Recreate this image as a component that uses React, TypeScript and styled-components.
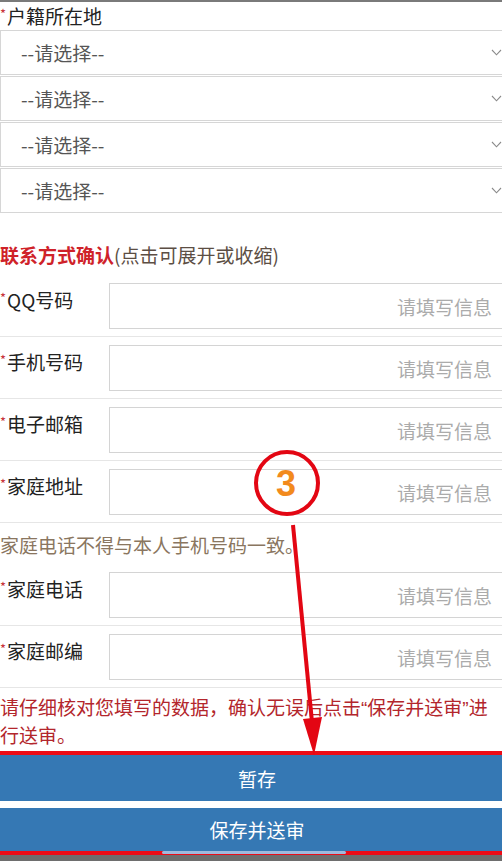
import React from 'react';
import styled, { createGlobalStyle } from 'styled-components';

const GlobalStyle = createGlobalStyle`
    html, body {
        margin: 0;
        padding: 0;
        background: #ffffff;
    }
    body {
        font-family: "Noto Sans CJK SC", "Noto Sans", "Liberation Sans", sans-serif;
    }
`;

const Page = styled.div`
    position: relative;
    width: 502px;
    height: 861px;
    overflow: hidden;
    background: #ffffff;
    border-top: 2px solid #7a7a7a;
    box-sizing: border-box;
`;

const FormBody = styled.div`
    width: 506px;
    display: flex;
    flex-direction: column;
`;

const Star = styled.span`
    color: #c8323a;
    font-size: 13px;
    vertical-align: 5px;
    margin-right: 1px;
`;

const FieldTitle = styled.div`
    height: 28px;
    line-height: 24px;
    font-size: 19px;
    color: #222222;
`;

const SelectBox = styled.div`
    height: 45px;
    margin-bottom: 1px;
    box-sizing: border-box;
    border: 1px solid #d6d6d6;
    display: flex;
    align-items: center;
    justify-content: space-between;
    padding: 0 3px 0 20px;
    font-size: 19px;
    color: #555555;
`;

const Chevron = styled.svg`
    width: 11px;
    height: 7px;
`;

const SectionHeader = styled.div`
    height: 61px;
    display: flex;
    align-items: flex-end;
    padding-bottom: 7px;
    box-sizing: border-box;
    font-size: 19px;
    line-height: 26px;
`;

const HeaderStrong = styled.span`
    color: #cf2229;
    font-weight: 700;
`;

const HeaderHint = styled.span`
    color: #5c4e44;
`;

const Row = styled.div`
    display: flex;
    height: 62px;
    box-sizing: border-box;
    padding-top: 8px;
    border-bottom: 1px solid #e6e6e6;
`;

const RowLabel = styled.div`
    width: 109px;
    flex-shrink: 0;
    padding-top: 2px;
    font-size: 19px;
    line-height: 26px;
    color: #222222;
`;

const InputBox = styled.div`
    flex: 1;
    height: 46px;
    box-sizing: border-box;
    border: 1px solid #d4d4d4;
    display: flex;
    align-items: center;
    justify-content: flex-end;
    padding-right: 13px;
    font-size: 19px;
    color: #ababab;
`;

const Notice = styled.div<{ $tone: 'brown' | 'red' }>`
    font-size: 19px;
    line-height: 28px;
    color: ${({ $tone }) => ($tone === 'red' ? '#b3262c' : '#8a7660')};
    padding: ${({ $tone }) => ($tone === 'red' ? '7px 0 0 0' : '8px 0 5px 0')};
    width: 502px;
    box-sizing: border-box;
`;

const ReviewNotice = styled(Notice)`
    font-family: "Liberation Sans", "Noto Sans CJK SC", sans-serif;
`;

const ButtonFrame = styled.div`
    border-top: 4px solid #ec0c17;
    border-bottom: 4px solid #ec0c17;
    display: flex;
    flex-direction: column;
    gap: 7px;
`;

const ActionButton = styled.div<{ $tall?: boolean }>`
    height: ${({ $tall }) => ($tall ? 46 : 43)}px;
    background: #3578b4;
    color: #ffffff;
    font-size: 19px;
    display: flex;
    align-items: center;
    justify-content: center;
    padding-left: 8px;
`;

const BottomEdge = styled.div`
    height: 6px;
    background: #6e6e6e;
`;

const HomeBar = styled.div`
    position: absolute;
    left: 162px;
    top: 849px;
    width: 184px;
    height: 3px;
    border-radius: 2px;
    background: #9fb9dc;
`;

const Overlay = styled.svg`
    position: absolute;
    left: 0;
    top: 0;
    pointer-events: none;
`;

const contacts = ['QQ号码', '手机号码', '电子邮箱', '家庭地址'];
const homeFields = ['家庭电话', '家庭邮编'];

const Field: React.FC<{ label: string }> = ({ label }) => (
    <Row>
        <RowLabel>
            <Star>*</Star>
            {label}
        </RowLabel>
        <InputBox>请填写信息</InputBox>
    </Row>
);

const App: React.FC = () => {
    return (
        <Page>
            <GlobalStyle />
            <FormBody>
                <FieldTitle>
                    <Star>*</Star>
                    户籍所在地
                </FieldTitle>
                {[0, 1, 2, 3].map((i) => (
                    <SelectBox key={i}>
                        <span>--请选择--</span>
                        <Chevron viewBox="0 0 11 7">
                            <path d="M1 1 L5.5 5.8 L10 1" fill="none" stroke="#8a8a8a" strokeWidth="1.1" />
                        </Chevron>
                    </SelectBox>
                ))}
                <SectionHeader>
                    <HeaderStrong>联系方式确认</HeaderStrong>
                    <HeaderHint>(点击可展开或收缩)</HeaderHint>
                </SectionHeader>
                {contacts.map((c) => (
                    <Field key={c} label={c} />
                ))}
                <Notice $tone="brown">家庭电话不得与本人手机号码一致。</Notice>
                {homeFields.map((c) => (
                    <Field key={c} label={c} />
                ))}
                <ReviewNotice $tone="red">
                    请仔细核对您填写的数据，确认无误后点击“保存并送审”进行送审。
                </ReviewNotice>
                <ButtonFrame>
                    <ActionButton $tall>暂存</ActionButton>
                    <ActionButton>保存并送审</ActionButton>
                </ButtonFrame>
                <BottomEdge />
            </FormBody>
            <HomeBar />
            <Overlay width="502" height="861" viewBox="0 0 502 861">
                <circle cx="287" cy="481" r="31" fill="none" stroke="#e30613" strokeWidth="4" />
                <text
                    x="286"
                    y="494"
                    textAnchor="middle"
                    fontFamily="Liberation Sans, Arial, sans-serif"
                    fontWeight="700"
                    fontSize="36"
                    fill="#f28a1d"
                >
                    3
                </text>
                <line x1="293" y1="523" x2="312" y2="720" stroke="#e30613" strokeWidth="4" />
                <polygon points="303,717 322,715 314,753" fill="#e30613" />
            </Overlay>
        </Page>
    );
};

export default App;
